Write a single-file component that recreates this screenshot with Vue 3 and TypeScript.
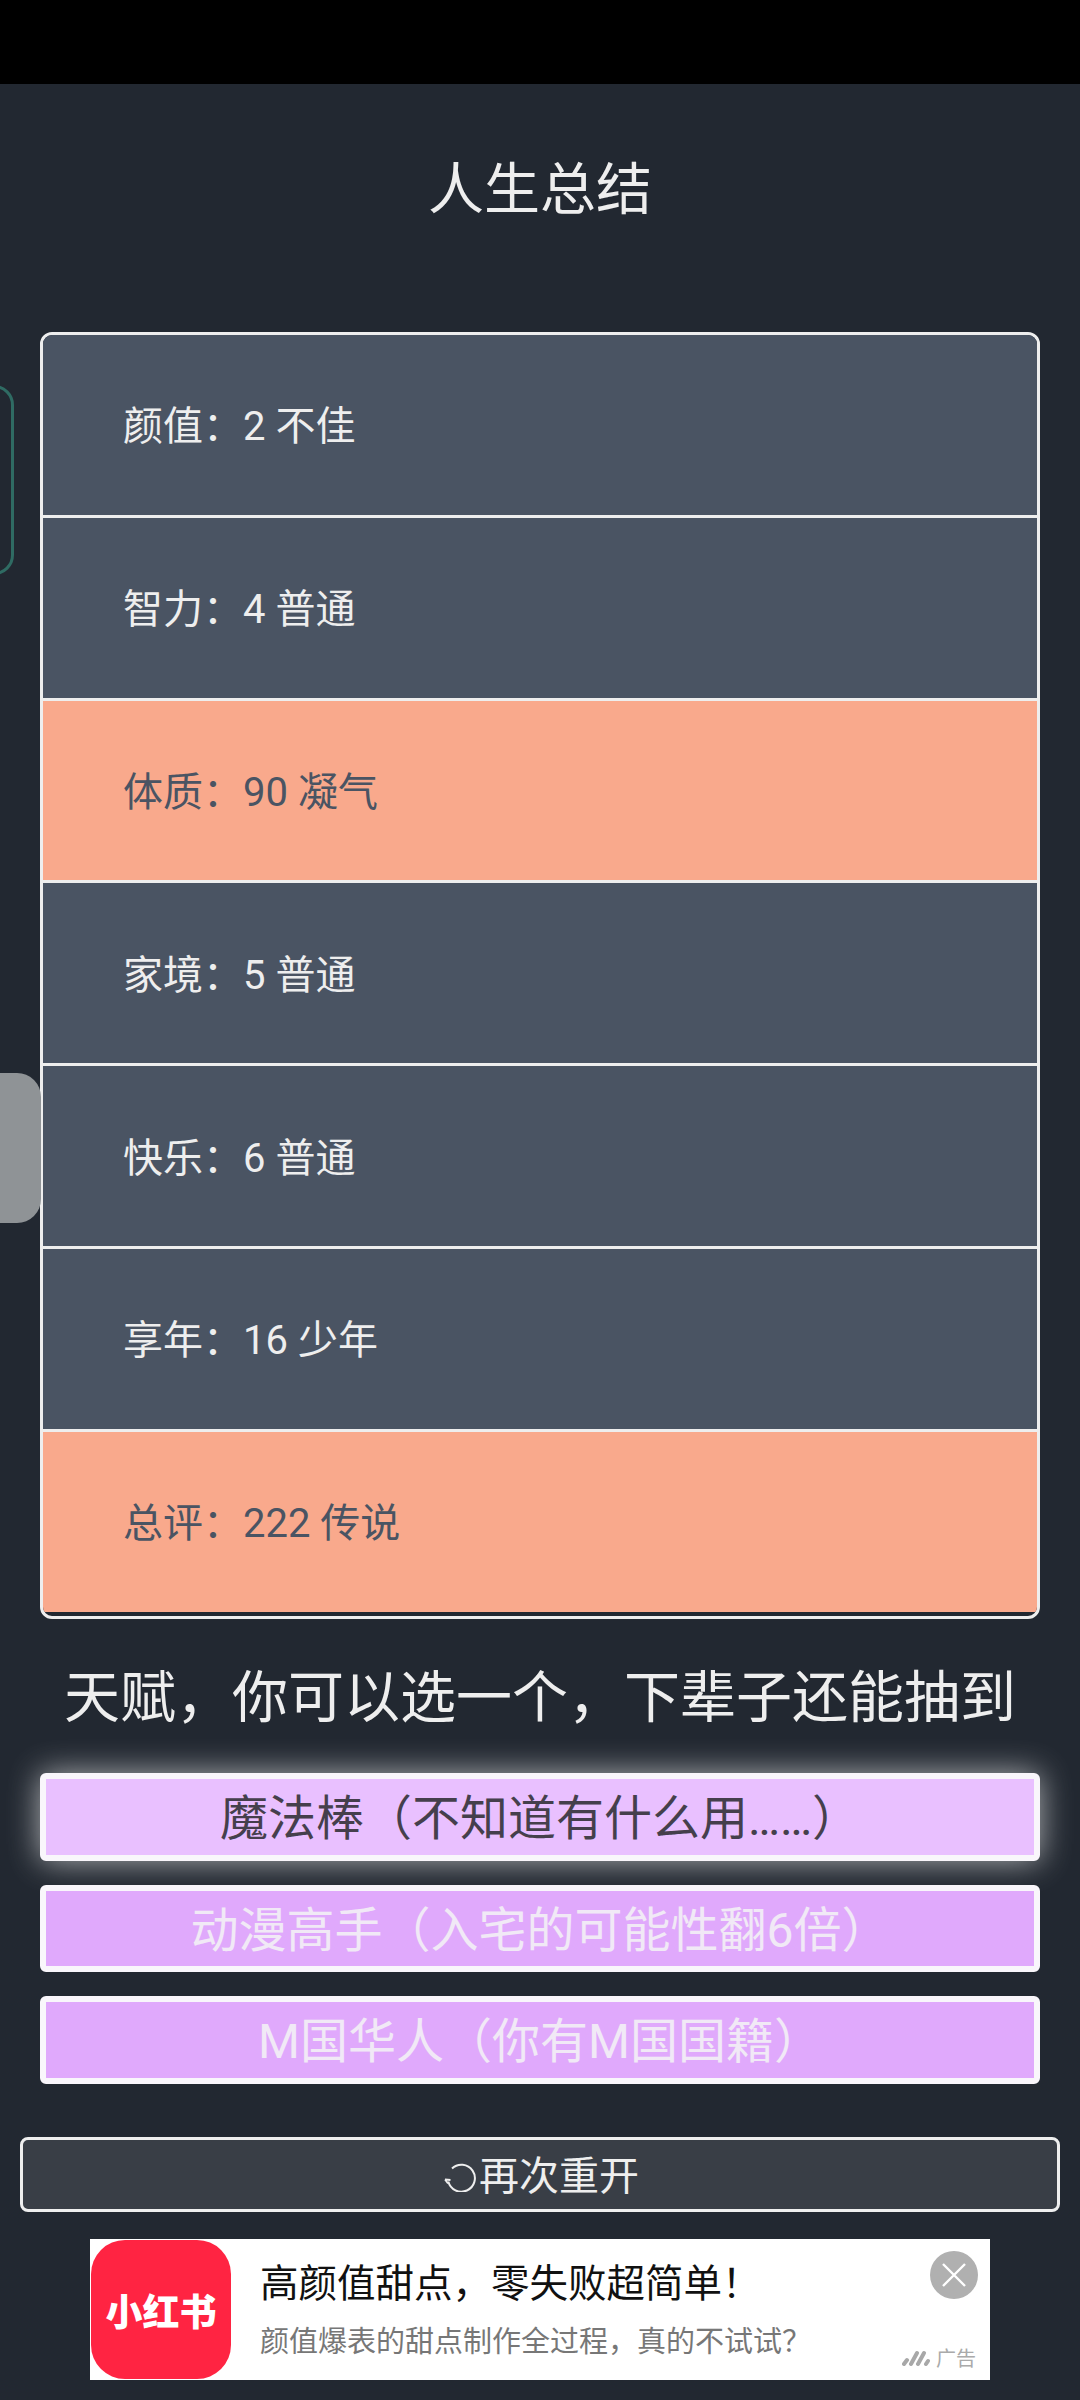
<script setup lang="ts">
interface Row { label: string; value: string; hot: boolean }
const rows: Row[] = [
  { label: '颜值：', value: '2 不佳', hot: false },
  { label: '智力：', value: '4 普通', hot: false },
  { label: '体质：', value: '90 凝气', hot: true },
  { label: '家境：', value: '5 普通', hot: false },
  { label: '快乐：', value: '6 普通', hot: false },
  { label: '享年：', value: '16 少年', hot: false },
  { label: '总评：', value: '222 传说', hot: true },
]
const talents = [
  { text: '魔法棒（不知道有什么用……）', selected: true },
  { text: '动漫高手（入宅的可能性翻6倍）', selected: false },
  { text: 'M国华人（你有M国国籍）', selected: false },
]
</script>

<template>
  <div class="page">
    <div class="status"></div>
    <h1 class="title">人生总结</h1>

    <div class="side-outline"></div>
    <div class="side-tab"></div>

    <ul class="summary">
      <li v-for="r in rows" :key="r.label" class="row" :class="{ hot: r.hot }">
        {{ r.label }}{{ r.value }}
      </li>
    </ul>

    <h2 class="heading">天赋，你可以选一个，下辈子还能抽到</h2>

    <div class="talents">
      <button v-for="t in talents" :key="t.text" class="talent" :class="{ selected: t.selected }">
        {{ t.text }}
      </button>
    </div>

    <button class="restart">
      <svg class="restart-icon" width="38" height="38" viewBox="0 0 38 38" fill="none" stroke="#eeeeee" stroke-width="2">
        <path d="M11 14.5A13.5 13.5 0 1 1 7.3 27.5" />
        <path d="M4 25.5L9.5 26M4 25.5L7 29.5" stroke-width="1.8" />
      </svg>
      <span>再次重开</span>
    </button>

    <div class="ad">
      <div class="logo">小红书</div>
      <div class="ad-text">
        <div class="ad-title">高颜值甜点，零失败超简单！</div>
        <div class="ad-sub">颜值爆表的甜点制作全过程，真的不试试？</div>
      </div>
      <div class="ad-close">
        <svg width="48" height="48" viewBox="0 0 48 48" stroke="#ffffff" stroke-width="2.4" fill="none">
          <path d="M13 13L35 35M35 13L13 35" />
        </svg>
      </div>
      <div class="ad-mark">
        <svg width="30" height="18" viewBox="0 0 30 18" fill="none" stroke="#a8a8a8" stroke-width="4" stroke-linecap="round">
          <path d="M2 15L5 11M9 15L15 4M16 15L22 4M24 15L26 12" />
        </svg>
        <span>广告</span>
      </div>
    </div>
  </div>
</template>

<style scoped>
.page {
  position: relative;
  width: 1080px;
  height: 2400px;
  overflow: hidden;
  background: #222831;
  color: #eeeeee;
  font-family: Roboto, "Noto Sans CJK SC", sans-serif;
  display: flex;
  flex-direction: column;
}
.status {
  height: 84px;
  background: #000000;
  flex: none;
}
.title {
  margin: 0 0 40px;
  height: 208px;
  box-sizing: border-box;
  padding-bottom: 8px;
  display: flex;
  align-items: center;
  justify-content: center;
  font-size: 56px;
  font-weight: 400;
  flex: none;
}
.side-outline {
  position: absolute;
  left: -40px;
  top: 385px;
  width: 54px;
  height: 190px;
  box-sizing: border-box;
  border: 3px solid #2f6b63;
  border-radius: 20px;
}
.side-tab {
  position: absolute;
  left: -40px;
  top: 1073px;
  width: 81px;
  height: 150px;
  border-radius: 24px;
  background: #8f9396;
  z-index: 2;
}
.summary {
  list-style: none;
  margin: 0 40px;
  padding: 0 0 4px;
  border: 3px solid #eeeeee;
  border-radius: 12px;
  overflow: hidden;
  flex: none;
}
.row {
  height: 182.8px;
  box-sizing: border-box;
  display: flex;
  align-items: center;
  padding-left: 80px;
  padding-bottom: 3px;
  font-size: 40px;
  white-space: pre;
  background: #4a5463;
  color: #eeeeee;
  border-bottom: 3px solid #eeeeee;
}
.row:last-child {
  height: 179.8px;
  border-bottom: none;
}
.row.hot {
  background: #f9a98c;
  color: #4a5463;
}
.heading {
  margin: 0;
  height: 154.5px;
  box-sizing: border-box;
  padding-bottom: 7px;
  display: flex;
  align-items: center;
  justify-content: center;
  font-size: 56px;
  font-weight: 400;
  flex: none;
}
.talents {
  display: flex;
  flex-direction: column;
  gap: 24px;
  margin: 0 40px;
  flex: none;
}
.talent {
  height: 87.7px;
  box-sizing: border-box;
  border: 6px solid #f9f6fb;
  border-radius: 6px;
  background: #e0a9fc;
  color: #f1e9f6;
  font-family: inherit;
  font-size: 48px;
  padding: 0 0 6px;
}
.talent.selected {
  background: #e9c0ff;
  color: #453f4c;
  box-shadow: 0 0 32px rgba(238, 238, 238, 0.7);
}
.restart {
  margin: 53px 20px 0;
  height: 75px;
  box-sizing: border-box;
  border: 3px solid #eeeeee;
  border-radius: 8px;
  background: #393e46;
  color: #eeeeee;
  font-family: inherit;
  font-size: 40px;
  display: flex;
  align-items: center;
  justify-content: center;
  padding: 0 0 3px;
  flex: none;
}
.restart-icon {
  flex: none;
}
.ad {
  position: relative;
  margin: 27px auto 0;
  width: 900px;
  height: 141px;
  background: #ffffff;
  display: flex;
  align-items: center;
  flex: none;
}
.logo {
  width: 140px;
  height: 139px;
  margin-left: 1px;
  border-radius: 34px;
  background: #ff2442;
  color: #ffffff;
  font-size: 37px;
  font-weight: 900;
  display: flex;
  align-items: center;
  justify-content: center;
  flex: none;
}
.ad-text {
  margin-left: 29px;
  padding-top: 6px;
  display: flex;
  flex-direction: column;
}
.ad-title {
  color: #111111;
  font-size: 38.5px;
  line-height: 58px;
}
.ad-sub {
  color: #777777;
  font-size: 29px;
  line-height: 58px;
}
.ad-close {
  position: absolute;
  top: 12px;
  right: 12px;
  width: 48px;
  height: 48px;
  border-radius: 50%;
  background: #b0b0b0;
}
.ad-mark {
  position: absolute;
  right: 14px;
  bottom: 8px;
  display: flex;
  align-items: center;
  gap: 4px;
  color: #aaaaaa;
  font-size: 20px;
}
</style>

<style>
html, body {
  margin: 0;
  background: #222831;
}
</style>
